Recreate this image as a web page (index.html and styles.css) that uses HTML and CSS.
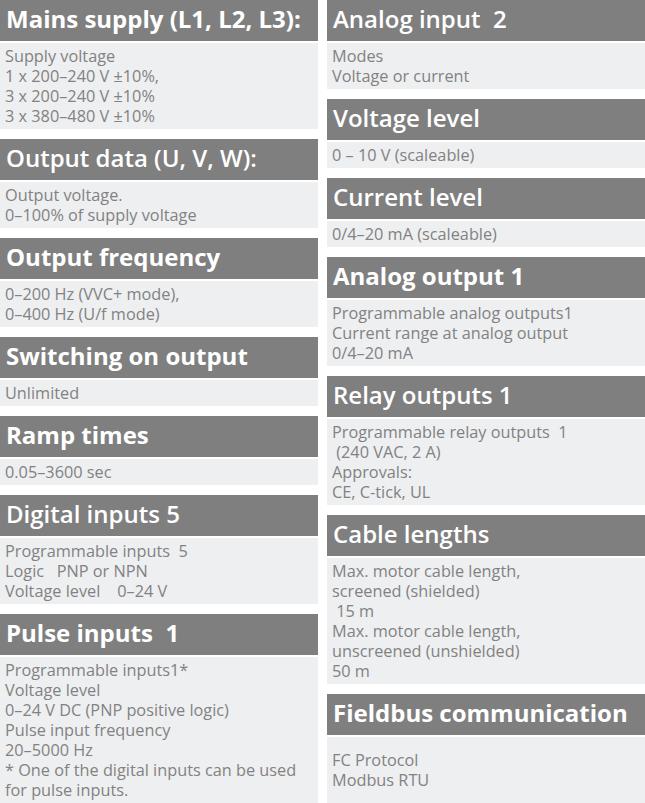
FILE: index.html
```html
<!DOCTYPE html>
<html>
<head>
<meta charset="utf-8">
<link rel="stylesheet" href="styles.css">
</head>
<body>
<div class="page">
  <div class="col">
    <section class="block">
      <h2 class="head bold">Mains supply (L1, L2, L3):</h2>
      <div class="body">
        <div class="ln">Supply voltage</div>
        <div class="ln">1 x 200–240 V ±10%,</div>
        <div class="ln">3 x 200–240 V ±10%</div>
        <div class="ln">3 x 380–480 V ±10%</div>
      </div>
    </section>
    <section class="block">
      <h2 class="head">Output data (U, V, W):</h2>
      <div class="body">
        <div class="ln">Output voltage.</div>
        <div class="ln">0–100% of supply voltage</div>
      </div>
    </section>
    <section class="block">
      <h2 class="head bold">Output frequency</h2>
      <div class="body">
        <div class="ln">0–200 Hz (VVC+ mode),</div>
        <div class="ln">0–400 Hz (U/f mode)</div>
      </div>
    </section>
    <section class="block">
      <h2 class="head bold">Switching on output</h2>
      <div class="body">
        <div class="ln">Unlimited</div>
      </div>
    </section>
    <section class="block">
      <h2 class="head bold">Ramp times</h2>
      <div class="body">
        <div class="ln">0.05–3600 sec</div>
      </div>
    </section>
    <section class="block">
      <h2 class="head">Digital inputs 5</h2>
      <div class="body">
        <div class="ln">Programmable inputs  5</div>
        <div class="ln">Logic   PNP or NPN</div>
        <div class="ln">Voltage level    0–24 V</div>
      </div>
    </section>
    <section class="block last">
      <h2 class="head bold">Pulse inputs  1</h2>
      <div class="body">
        <div class="ln">Programmable inputs1*</div>
        <div class="ln">Voltage level</div>
        <div class="ln">0–24 V DC (PNP positive logic)</div>
        <div class="ln">Pulse input frequency</div>
        <div class="ln">20–5000 Hz</div>
        <div class="ln">* One of the digital inputs can be used for pulse inputs.</div>
      </div>
    </section>
  </div>
  <div class="col">
    <section class="block">
      <h2 class="head">Analog input  2</h2>
      <div class="body">
        <div class="ln">Modes</div>
        <div class="ln">Voltage or current</div>
      </div>
    </section>
    <section class="block">
      <h2 class="head">Voltage level</h2>
      <div class="body">
        <div class="ln">0 – 10 V (scaleable)</div>
      </div>
    </section>
    <section class="block">
      <h2 class="head">Current level</h2>
      <div class="body">
        <div class="ln">0/4–20 mA (scaleable)</div>
      </div>
    </section>
    <section class="block">
      <h2 class="head bold">Analog output 1</h2>
      <div class="body">
        <div class="ln">Programmable analog outputs1</div>
        <div class="ln">Current range at analog output</div>
        <div class="ln">0/4–20 mA</div>
      </div>
    </section>
    <section class="block">
      <h2 class="head">Relay outputs 1</h2>
      <div class="body">
        <div class="ln">Programmable relay outputs  1</div>
        <div class="ln"> (240 VAC, 2 A)</div>
        <div class="ln">Approvals:</div>
        <div class="ln">CE, C-tick, UL</div>
      </div>
    </section>
    <section class="block">
      <h2 class="head">Cable lengths</h2>
      <div class="body">
        <div class="ln">Max. motor cable length,</div>
        <div class="ln">screened (shielded)</div>
        <div class="ln"> 15 m</div>
        <div class="ln">Max. motor cable length,</div>
        <div class="ln">unscreened (unshielded)</div>
        <div class="ln">50 m</div>
      </div>
    </section>
    <section class="block last">
      <h2 class="head bold">Fieldbus communication</h2>
      <div class="body spaced">
        <div class="ln">FC Protocol</div>
        <div class="ln">Modbus RTU</div>
      </div>
    </section>
  </div>
</div>
</body>
</html>
```

FILE: styles.css
```css
html, body {
  margin: 0;
  padding: 0;
  background: #ffffff;
}

body {
  font-family: "Open Sans", "Noto Sans", sans-serif;
  width: 645px;
  overflow: hidden;
}

.page {
  display: grid;
  grid-template-columns: 318px 318px;
  column-gap: 9px;
  align-items: start;
}

.col {
  display: flex;
  flex-direction: column;
  gap: 10px;
}

.block {
  display: flex;
  flex-direction: column;
  gap: 2px;
}

.head {
  margin: 0;
  height: 41px;
  box-sizing: border-box;
  padding: 0 0 0 6px;
  background: #7f7f7f;
  color: #ffffff;
  font-size: 24px;
  line-height: 38px;
  font-weight: 600;
  white-space: pre;
  overflow: hidden;
}

.head.bold {
  font-weight: 700;
}

.body {
  background: #eeeff1;
  color: #828282;
  font-size: 16.3px;
  line-height: 20px;
  padding: 3px 5px 3px 5px;
}

.body.spaced {
  padding-top: 13px;
  padding-bottom: 30px;
}

.last .body {
  padding-bottom: 20px;
}

.ln {
  white-space: pre-wrap;
}
```
